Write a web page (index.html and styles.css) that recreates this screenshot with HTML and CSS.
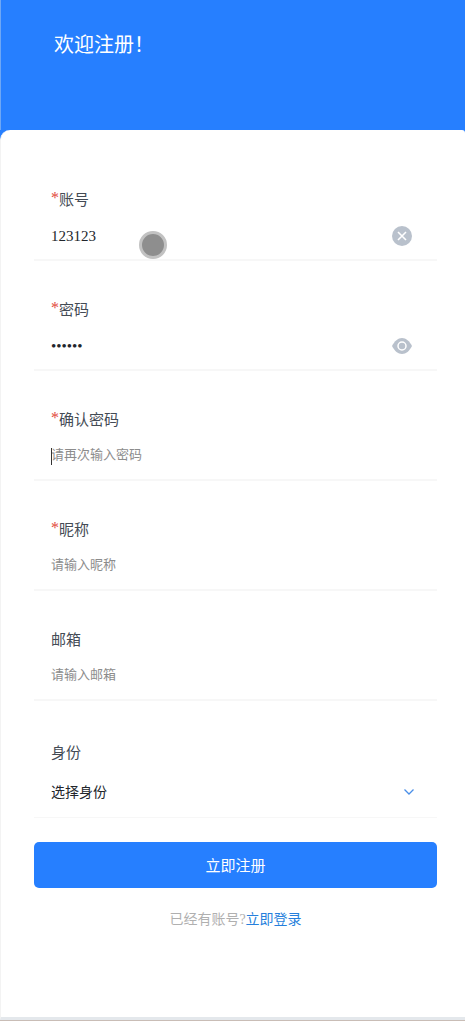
FILE: index.html
```html
<!DOCTYPE html>
<html lang="zh-CN">
    <head>
        <meta charset="utf-8">
        <title>注册</title>
        <meta name="viewport" content="width=device-width, initial-scale=1">
        <link rel="stylesheet" href="styles.css">
    </head>

    <body>
        <header class="header">
            <h1>欢迎注册！</h1>
        </header>

        <main class="card">
            <form class="form">
                <div class="field">
                    <label for="account"><span class="required">*</span>账号</label>
                    <div class="control">
                        <input type="text" id="account" value="123123">
                        <button type="button" class="icon-btn" aria-label="清除">
                            <svg width="20" height="20" viewBox="0 0 20 20">
                                <circle cx="10" cy="10" r="10" fill="#b9c1cc"/>
                                <path d="M6 6l8 8M14 6l-8 8" stroke="#fff" stroke-width="1.6"/>
                            </svg>
                        </button>
                    </div>
                    <span class="touch"></span>
                </div>

                <div class="field">
                    <label for="password"><span class="required">*</span>密码</label>
                    <div class="control">
                        <input type="password" id="password" value="123123">
                        <button type="button" class="icon-btn" aria-label="显示密码">
                            <svg width="20" height="20" viewBox="0 0 20 20">
                                <path d="M0 10C2.500 5 6 2 10 2s7.500 3 10 8c-2.500 5-6 8-10 8s-7.500-3-10-8z" fill="#b9c1cc"/>
                                <circle cx="10" cy="10" r="4" fill="none" stroke="#fff" stroke-width="1.500"/>
                            </svg>
                        </button>
                    </div>
                </div>

                <div class="field">
                    <label for="confirm"><span class="required">*</span>确认密码</label>
                    <div class="control">
                        <span class="caret"></span>
                        <input type="password" id="confirm" placeholder="请再次输入密码">
                    </div>
                </div>

                <div class="field">
                    <label for="nickname"><span class="required">*</span>昵称</label>
                    <div class="control">
                        <input type="text" id="nickname" placeholder="请输入昵称">
                    </div>
                </div>

                <div class="field">
                    <label for="email">邮箱</label>
                    <div class="control">
                        <input type="email" id="email" placeholder="请输入邮箱">
                    </div>
                </div>

                <div class="field field-select">
                    <label for="role">身份</label>
                    <div class="control">
                        <select id="role">
                            <option>选择身份</option>
                        </select>
                        <svg class="arrow" width="10" height="6" viewBox="0 0 10 6">
                            <path d="M0.500 0.500L5 5l4.500-4.500" fill="none" stroke="#4a8fe8" stroke-width="1.300"/>
                        </svg>
                    </div>
                </div>

                <button type="submit" class="submit">立即注册</button>
            </form>

            <p class="login">已经有账号?<a href="#">立即登录</a></p>
        </main>
    </body>
</html>
```

FILE: styles.css
```css
* {
    box-sizing: border-box;
}
body {
    display: flex;
    flex-direction: column;
    min-height: 100vh;
    margin: 0;
    background-color: #267fff;
    border-bottom: 1px solid #c9bdb6;
    font-family: "Liberation Serif", "Noto Sans CJK SC", serif;
    font-size: 15px;
    color: #444b55;
}
.header {
    height: 130px;
    padding: 30px 53px;
    border-left: 1px solid #6ea7f5;
}
.header h1 {
    margin: 0;
    font-size: 20px;
    font-weight: normal;
    line-height: 30px;
    color: #fff;
}
.card {
    flex: 1;
    padding: 21px 28px 40px 33px;
    background-color: #fff;
    border-left: 1px solid #f3f3f3;
    border-bottom: 3px solid #e4e8ec;
    border-radius: 10px 3px 0 0;
}

/* form rows */
.field {
    position: relative;
    padding: 37px 16px 11px 17px;
    border-bottom: 2px solid #f7f7f7;
}
.field label {
    display: block;
    height: 24px;
    line-height: 24px;
}
.required {
    font-size: 16px;
    line-height: 1;
    vertical-align: 2px;
    color: #e2473c;
}
.control {
    position: relative;
    display: flex;
    align-items: center;
    height: 24px;
    margin-top: 12px;
    padding-right: 9px;
}
.control input,
.control select {
    flex: 1;
    min-width: 0;
    height: 24px;
    margin: 0;
    padding: 0;
    border: none;
    outline: none;
    background: none;
    font-family: inherit;
    font-size: 15px;
    color: #22262c;
}
.control input:placeholder-shown {
    padding-bottom: 4px;
}
.control input::placeholder {
    font-size: 13px;
    color: #8c8c8c;
}
.control select {
    appearance: none;
    font-size: 14px;
}
.icon-btn {
    display: flex;
    padding: 0;
    border: none;
    background: none;
    cursor: pointer;
}
.field-select {
    padding-top: 40px;
    padding-bottom: 13px;
    border-bottom-width: 1px;
}
.field-select .control {
    margin-top: 15px;
    padding-right: 7px;
}
.arrow {
    pointer-events: none;
}

/* text cursor and touch point drawn over the fields */
.caret {
    position: absolute;
    left: 0;
    top: 4px;
    width: 1px;
    height: 17px;
    background-color: #333;
}
.touch {
    position: absolute;
    left: 105px;
    bottom: 0;
    width: 28px;
    height: 28px;
    border: 3px solid #c2c2c2;
    border-radius: 50%;
    background-color: #8e8e8e;
}

.submit {
    display: block;
    width: 100%;
    height: 46px;
    margin-top: 24px;
    padding: 0 0 2px;
    border: none;
    border-radius: 5px;
    background-color: #267fff;
    font-family: inherit;
    font-size: 15px;
    color: #fff;
    cursor: pointer;
}
.login {
    margin: 20px 0 0;
    font-size: 14px;
    line-height: 24px;
    text-align: center;
    color: #b0b0b0;
}
.login a {
    color: #267fdc;
    text-decoration: none;
}
```
